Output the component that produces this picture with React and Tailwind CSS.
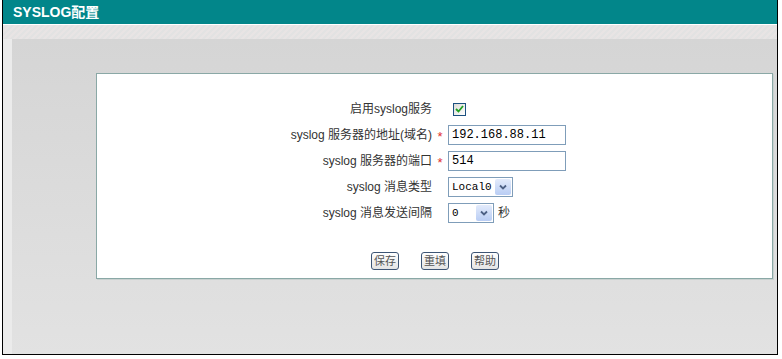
import { useState } from "react";

const font = { fontFamily: '"Liberation Sans", "Noto Sans CJK SC", sans-serif' };

const Row = ({ label, required, children }) => (
  <div className="flex items-center h-[26px]">
    <div className="w-[335px] text-right text-[12px] text-[#333]">{label}</div>
    <div className="w-[16px] text-center text-[13px] text-[#e03030] leading-none pt-[3px]">
      {required ? "*" : ""}
    </div>
    <div className="flex items-center">{children}</div>
  </div>
);

const Select = ({ value, width }) => (
  <div
    className="flex items-center h-[20px] border border-[#7f9db9] bg-white"
    style={{ width }}
  >
    <span className="flex-1 pl-[3px] text-[11px] text-black font-['Liberation_Mono',monospace]">{value}</span>
    <span className="w-[16px] h-[16px] mr-[1px] flex items-center justify-center bg-gradient-to-b from-[#e3ebfb] to-[#b9cdf4] rounded-[2px]">
      <svg width="8" height="6" viewBox="0 0 8 6">
        <path d="M1 1.5 L4 4.5 L7 1.5" stroke="#4d6185" strokeWidth="1.8" fill="none" />
      </svg>
    </span>
  </div>
);

const Btn = ({ children }) => (
  <button className="w-[28px] h-[18px] text-[11px] text-[#555] border border-[#3d5575] rounded-[3px] bg-gradient-to-b from-white to-[#e4e4e4] leading-none">
    {children}
  </button>
);

export default function App() {
  const [enabled, setEnabled] = useState(true);

  return (
    <div className="w-[782px] h-[359px] bg-white" style={font}>
      <div className="ml-[2px] w-[776px] h-[355px] border-x border-b border-black flex flex-col">
        {/* header */}
        <div className="h-[24px] bg-[#02868a] flex items-center pl-[10px] text-white font-bold text-[14px] border-b border-white box-content">
          SYSLOG配置
        </div>
        <div className="h-[14px] bg-[linear-gradient(135deg,#e8e4e4_25%,#e2e2e2_25%,#e2e2e2_50%,#e8e4e4_50%,#e8e4e4_75%,#e2e2e2_75%)] bg-[length:6px_6px]" />

        <div className="flex-1 flex">
          <div className="w-[9px] bg-[#ebebeb]" />
          <div className="flex-1 bg-gradient-to-b from-[#d5d5d5] to-[#e2e2e2] pt-[34px] pl-[84px] pr-[4px]">
            {/* panel */}
            <div className="h-[206px] bg-white border border-[#8aa8a6] shadow-[1px_1px_0_#c8d0cf] flex flex-col pt-[22px]">
              <Row label="启用syslog服务">
                <span
                  onClick={() => setEnabled(!enabled)}
                  className="ml-[5px] w-[13px] h-[13px] border border-[#1c5180] bg-gradient-to-br from-[#dcdcd7] to-white flex items-center justify-center"
                >
                  {enabled && (
                    <svg width="9" height="8" viewBox="0 0 9 8">
                      <path d="M1 4 L3.5 6.5 L8 1" stroke="#21a121" strokeWidth="1.8" fill="none" />
                    </svg>
                  )}
                </span>
              </Row>
              <Row label="syslog 服务器的地址(域名)" required>
                <input
                  defaultValue="192.168.88.11"
                  className="w-[118px] h-[20px] border border-[#7f9db9] px-[3px] text-[12px] text-black font-['Liberation_Mono',monospace] outline-none"
                />
              </Row>
              <Row label="syslog 服务器的端口" required>
                <input
                  defaultValue="514"
                  className="w-[118px] h-[20px] border border-[#7f9db9] px-[3px] text-[12px] text-black font-['Liberation_Mono',monospace] outline-none"
                />
              </Row>
              <Row label="syslog 消息类型">
                <Select value="Local0" width={65} />
              </Row>
              <Row label="syslog 消息发送间隔">
                <Select value="0" width={46} />
                <span className="ml-[4px] text-[12px] text-[#333]">秒</span>
              </Row>

              <div className="flex gap-[22px] mt-[26px] pl-[274px]">
                <Btn>保存</Btn>
                <Btn>重填</Btn>
                <Btn>帮助</Btn>
              </div>
            </div>
          </div>
        </div>
      </div>
    </div>
  );
}
